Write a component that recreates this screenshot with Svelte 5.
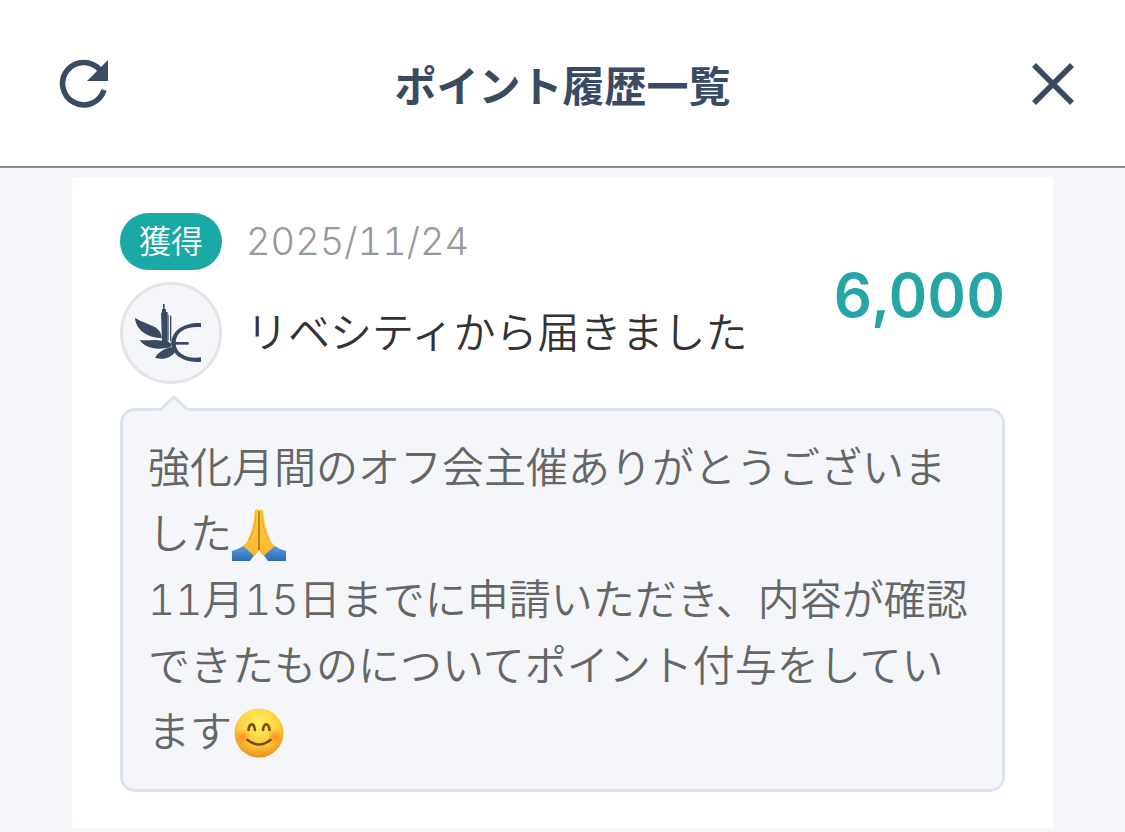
<script lang="ts">
  type Part = { text?: string; emoji?: "pray" | "smile"; br?: boolean };

  let {
    onrefresh,
    onclose,
  }: {
    onrefresh?: () => void;
    onclose?: () => void;
  } = $props();

  const message: Part[] = [
    { text: "強化月間のオフ会主催ありがとうございました" },
    { emoji: "pray" },
    { br: true },
    {
      text: "11月15日までに申請いただき、内容が確認できたものについてポイント付与をしています",
    },
    { emoji: "smile" },
  ];

  let history = $state([
    {
      type: "獲得",
      date: "2025/11/24",
      title: "リベシティから届きました",
      amount: 6000,
      message,
    },
  ]);
</script>

<header class="header">
  <button
    class="icon-button refresh"
    aria-label="更新"
    onclick={() => onrefresh?.()}
  >
    <svg width="50" height="50" viewBox="0 0 50 50">
      <path
        d="M45 31A21.2 21.2 0 1 1 41 11"
        fill="none"
        stroke="currentColor"
        stroke-width="5.6"
      />
      <path d="M49 1V22H28z" fill="currentColor" />
    </svg>
  </button>
  <h1>ポイント履歴一覧</h1>
  <button
    class="icon-button close"
    aria-label="閉じる"
    onclick={() => onclose?.()}
  >
    <svg width="44" height="44" viewBox="0 0 44 44">
      <path
        d="M3 3L41 41M41 3L3 41"
        stroke="currentColor"
        stroke-width="5.6"
      />
    </svg>
  </button>
</header>

<main class="list">
  {#each history as item}
    <article class="card">
      <div class="summary">
        <div class="detail">
          <span class="badge">{item.type}</span>
          <time class="date">{item.date}</time>
          <div class="avatar">
            <svg width="72" height="62" viewBox="75 96 216 186" fill="#3a4a63">
              <path
                d="M75 143C92 156 118 161 136 172C148 180 154 190 156 204C116 203 78 183 75 143z"
              />
              <path
                d="M89 210C112 213 136 206 156 213L184 224L182 231C150 241 108 238 89 210z"
              />
              <path
                d="M135 263C145 246 163 235 186 231L194 248C181 264 155 271 135 263z"
              />
              <path
                d="M153 128H156V117H159V102H164V117H168V126H173V214L184 221V229L156 217z"
              />
              <path d="M173 134H176V212H173zM180 137H184V212L180 215z" />
              <path
                d="M273 159V171C228 168 198 184 197 218C197 251 229 267 273 262V275C220 280 187 255 184 222C184 181 222 157 273 159z"
              />
              <path d="M184 216H236V224H184z" />
            </svg>
          </div>
          <h2>{item.title}</h2>
        </div>
        <strong class="amount">{item.amount.toLocaleString("en-US")}</strong>
      </div>

      <div class="bubble">
        <svg class="tail" width="32" height="17" viewBox="0 0 32 17">
          <path d="M1 17V15L16 1L31 15V17z" fill="#f4f6fa" />
          <path
            d="M2 15L16 2L30 15"
            fill="none"
            stroke="#dde3ee"
            stroke-width="3"
          />
        </svg>
        <p>
          {#each item.message as part}
            {#if part.br}
              <br />
            {:else if part.emoji === "pray"}
              <svg class="emoji" viewBox="0 0 54 54" role="img" aria-label="合掌">
                <defs>
                  <linearGradient id="hand" x1="0" y1="0" x2="0" y2="1">
                    <stop offset="0" stop-color="#ffd24a" />
                    <stop offset="1" stop-color="#fbb62c" />
                  </linearGradient>
                  <linearGradient id="sleeve" x1="0" y1="0" x2="0" y2="1">
                    <stop offset="0" stop-color="#5aa0e2" />
                    <stop offset="1" stop-color="#2c6cb5" />
                  </linearGradient>
                </defs>
                <path
                  d="M0 44Q7 42 13 38L24 47Q20 50 18 54H0z"
                  fill="url(#sleeve)"
                />
                <path
                  d="M54 44Q47 42 41 38L30 47Q34 50 36 54H54z"
                  fill="url(#sleeve)"
                />
                <path
                  d="M23 3Q27 0 27 5V43Q26 46 22 49C19 46 15 42 11 39C17 34 18 27 20 21C22 15 22 8 23 3z"
                  fill="url(#hand)"
                />
                <path
                  d="M31 3Q27 0 27 5V43Q28 46 32 49C35 46 39 42 43 39C37 34 36 27 34 21C32 15 32 8 31 3z"
                  fill="url(#hand)"
                />
                <path
                  d="M27 4V43"
                  fill="none"
                  stroke="#a96208"
                  stroke-width="1.4"
                />
                <path
                  d="M24 4C24 16 22 26 17 33M30 4C30 16 32 26 37 33"
                  fill="none"
                  stroke="#e29a1e"
                  stroke-width="0.8"
                />
              </svg>
            {:else if part.emoji === "smile"}
              <svg class="emoji" viewBox="0 0 54 54" role="img" aria-label="笑顔">
                <defs>
                  <radialGradient id="face" cx="0.5" cy="0.3" r="0.7">
                    <stop offset="0" stop-color="#fff15e" />
                    <stop offset="0.6" stop-color="#fdcf3d" />
                    <stop offset="1" stop-color="#ee8f1c" />
                  </radialGradient>
                  <radialGradient id="cheek">
                    <stop offset="0" stop-color="#ff7a1c" stop-opacity="0.75" />
                    <stop offset="1" stop-color="#ff7a1c" stop-opacity="0" />
                  </radialGradient>
                </defs>
                <circle cx="27" cy="28" r="24.5" fill="url(#face)" />
                <circle cx="11" cy="32" r="8" fill="url(#cheek)" />
                <circle cx="43" cy="32" r="8" fill="url(#cheek)" />
                <path
                  d="M16.5 25C17.5 17.5 22 17.5 23 25M31 25C32 17.5 36.5 17.5 37.5 25"
                  fill="none"
                  stroke="#7a4a08"
                  stroke-width="2.6"
                  stroke-linecap="round"
                />
                <path
                  d="M15.5 35Q27 44 38.5 35"
                  fill="none"
                  stroke="#7a4a08"
                  stroke-width="2.6"
                  stroke-linecap="round"
                />
              </svg>
            {:else}{part.text}{/if}
          {/each}
        </p>
      </div>
    </article>
  {/each}
</main>

<style>
  :global(body) {
    margin: 0;
    background: #f4f6fa;
    font-family: Inter, "Noto Sans CJK JP", sans-serif;
    font-variant-numeric: tabular-nums;
  }
  .header {
    display: grid;
    grid-template-columns: 1fr auto 1fr;
    align-items: center;
    height: 164px;
    padding: 2px 50px 0;
    background: #fff;
    border-bottom: 2px solid #8c8c90;
    color: #3a4a63;
  }
  .icon-button {
    display: flex;
    padding: 0;
    border: none;
    background: none;
    color: inherit;
    cursor: pointer;
  }
  .refresh {
    justify-self: start;
    margin-left: 9px;
  }
  .close {
    justify-self: end;
  }
  h1 {
    margin: 0;
    font-family: "Noto Sans CJK JP", sans-serif;
    font-size: 42px;
    font-weight: 700;
    line-height: 60px;
  }
  .list {
    padding: 9px 72px 4px;
  }
  .card {
    padding: 36px 48px;
    background: #fff;
  }
  .summary {
    display: flex;
    align-items: center;
    justify-content: space-between;
  }
  .detail {
    display: grid;
    grid-template-columns: 102px auto;
    align-items: center;
    gap: 12px 24px;
  }
  .badge {
    border-radius: 29px;
    background: #1ba9a8;
    color: #fff;
    font-size: 32px;
    font-weight: 350;
    line-height: 57px;
    text-align: center;
  }
  .date {
    color: #999;
    font-size: 38px;
    font-weight: 350;
    line-height: 57px;
  }
  .avatar {
    box-sizing: border-box;
    display: flex;
    align-items: center;
    justify-content: center;
    width: 102px;
    height: 102px;
    border: 3px solid #e3e4e6;
    border-radius: 50%;
    background: #f4f6fa;
  }
  h2 {
    margin: 0;
    color: #333;
    font-size: 42px;
    font-weight: 350;
    line-height: 60px;
  }
  .amount {
    padding-bottom: 8px;
    color: #25a5a5;
    font-size: 60px;
    font-weight: 600;
    line-height: 72px;
  }
  .bubble {
    position: relative;
    margin-top: 24px;
    padding: 24px 25px;
    border: 3px solid #dde3ee;
    border-radius: 15px;
    background: #f4f6fa;
  }
  .tail {
    position: absolute;
    top: -16px;
    left: 35px;
  }
  p {
    margin: 0;
    color: #666;
    font-size: 42px;
    font-weight: 350;
    line-height: 66px;
    line-break: anywhere;
  }
  .emoji {
    width: 54px;
    height: 54px;
    vertical-align: -12px;
  }
</style>
